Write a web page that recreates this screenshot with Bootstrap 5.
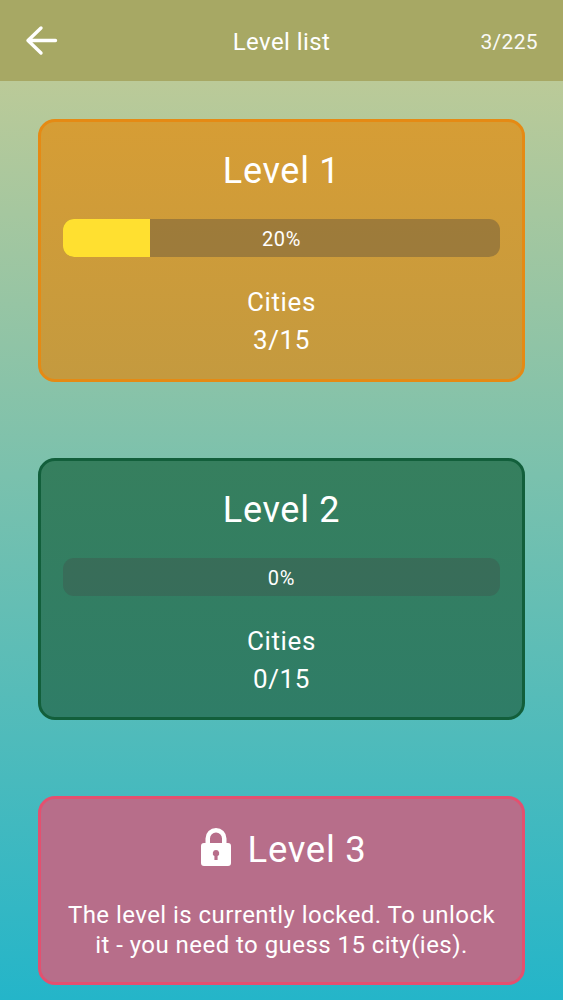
<!DOCTYPE html>
<html lang="en">
<head>
<meta charset="utf-8">
<title>Level list</title>
<link href="https://cdn.jsdelivr.net/npm/bootstrap@5.3.0/dist/css/bootstrap.min.css" rel="stylesheet">
<style>
html,body{height:1000px;overflow:hidden}
body{font-family:Roboto,"Liberation Sans",sans-serif;color:#fff;background:linear-gradient(180deg,#bbca98 0,#bbca98 81px,#24b5c9 1000px)}
.app-bar{height:81px;background:#a7a864;padding:0 25px}
.app-title{font-size:24px;line-height:1;position:absolute;left:0;right:0;text-align:center;top:30px;letter-spacing:.4px}
.app-count{font-size:21px;line-height:1;letter-spacing:.35px;padding-top:3px;opacity:.95}
.level-wrap{padding:38px 38px 0;gap:76px}
.level-box{border:3px solid;border-radius:17px;text-align:center;padding:0 22px}
.lv-gold{background:#d39c37;border-color:#e58a14;height:263px;background-image:linear-gradient(180deg,#d69d35,#c49a3f)}
.lv-green{background:#377f61;border-color:#125f3b;height:262px;background-image:linear-gradient(180deg,#367f5e,#2f7d67)}
.lv-pink{background:#b76e8a;border-color:#e4506f;height:189px}
.lv-title{font-size:36px;line-height:42px;font-weight:400;margin:0;padding-top:28px;letter-spacing:.7px}
.lv-bar{height:38px;border-radius:11px;font-size:20px;margin-top:27px;background:rgba(80,70,60,.38)}
.lv-green .lv-bar{background:rgba(70,70,70,.3)}
.lv-fill{background:#ffe030;width:20%}
.lv-pct{position:absolute;inset:0;line-height:40px;letter-spacing:.7px}
.lv-sub{font-size:26px;line-height:38px;margin-top:26px;letter-spacing:.6px}
.lv-lock{gap:17px;padding:29px 0 0 4px}
.lv-lock svg{margin-bottom:5px}
.lv-lock .lv-title{padding-top:0;font-size:36.5px}
.lv-msg{font-size:24px;line-height:30px;margin-top:29px;letter-spacing:.45px}
</style>
</head>
<body>
<header class="app-bar d-flex align-items-center justify-content-between position-relative">
  <svg width="34" height="32" viewBox="0 0 34 32" fill="none" stroke="#fff" stroke-width="3.4" stroke-linecap="round" stroke-linejoin="round" aria-label="Back"><path d="M30.5 15.5H3M16 3 3 15.5 16 28"/></svg>
  <div class="app-title">Level list</div>
  <div class="app-count">3/225</div>
</header>
<main class="level-wrap d-flex flex-column">
  <section class="level-box lv-gold">
    <h2 class="lv-title">Level 1</h2>
    <div class="lv-bar position-relative overflow-hidden"><div class="lv-fill h-100"></div><div class="lv-pct">20%</div></div>
    <div class="lv-sub">Cities<br>3/15</div>
  </section>
  <section class="level-box lv-green">
    <h2 class="lv-title">Level 2</h2>
    <div class="lv-bar position-relative overflow-hidden"><div class="lv-pct">0%</div></div>
    <div class="lv-sub">Cities<br>0/15</div>
  </section>
  <section class="level-box lv-pink">
    <div class="lv-lock d-flex align-items-center justify-content-center">
      <svg width="30" height="38" viewBox="0 0 30 38" aria-label="Locked"><path fill="#fff" fill-rule="evenodd" d="M4.5 15V10.5a10.5 10.5 0 0 1 21 0V15H27a3 3 0 0 1 3 3v17a3 3 0 0 1-3 3H3a3 3 0 0 1-3-3V18a3 3 0 0 1 3-3Zm4.5 0h12V10.5a6 6 0 0 0-12 0Zm6 7a3.2 3.2 0 0 0-1.6 6V32h3.2v-4A3.2 3.2 0 0 0 15 22Z"/></svg>
      <h2 class="lv-title">Level 3</h2>
    </div>
    <p class="lv-msg mb-0">The level is currently locked. To unlock it - you need to guess 15 city(ies).</p>
  </section>
</main>
</body>
</html>
